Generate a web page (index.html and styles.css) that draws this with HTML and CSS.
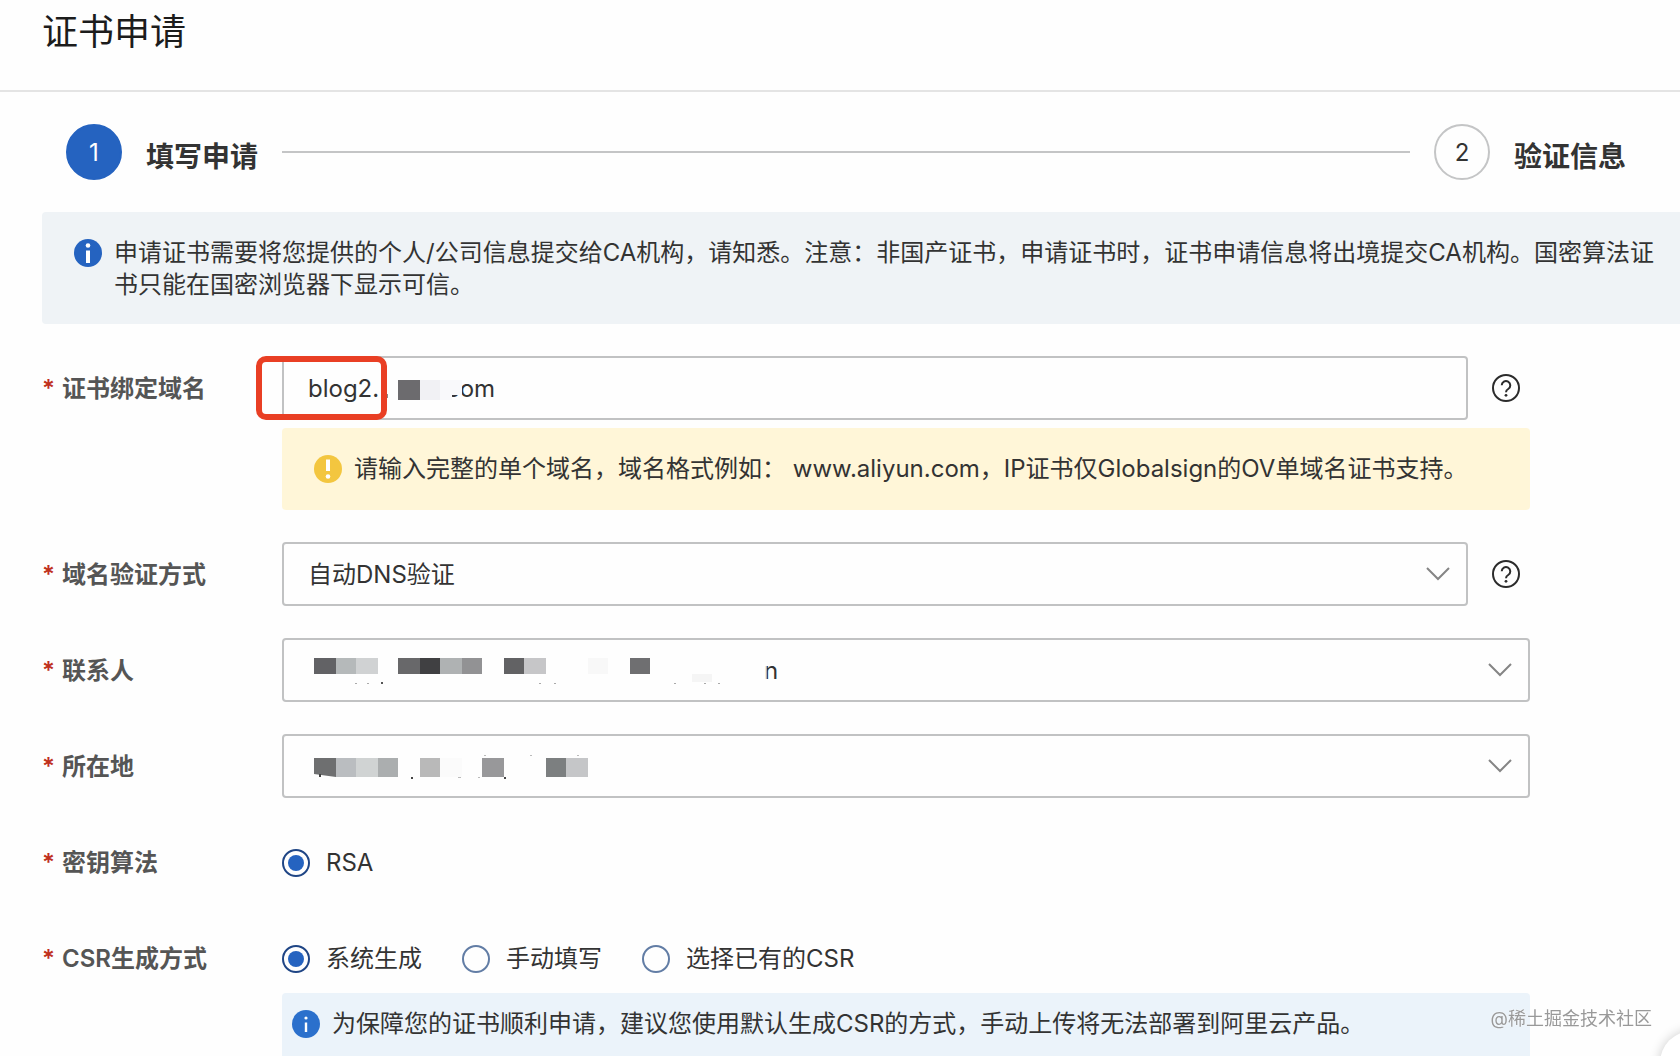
FILE: index.html
```html
<!DOCTYPE html>
<html lang="zh-CN">
<head>
<meta charset="utf-8">
<meta name="viewport" content="width=device-width, initial-scale=1">
<title>证书申请</title>
<link rel="stylesheet" href="styles.css">
</head>
<body>
<header class="page-header"><h1 class="page-title">证书申请</h1></header>
<main class="page-main">
  <ol class="steps">
    <li class="step"><span class="step-number step-number-active">1</span><span class="step-label">填写申请</span></li>
    <li class="step-line" aria-hidden="true"></li>
    <li class="step"><span class="step-number">2</span><span class="step-label">验证信息</span></li>
  </ol>

  <section class="notice notice-page">
    <svg class="icon" viewBox="0 0 28 28" aria-hidden="true"><circle cx="14" cy="14" r="14" fill="#2563c0"/><circle cx="14" cy="6.5" r="2.3" fill="#fff"/><path d="M12 11.500h4V24h-4z" fill="#fff"/></svg>
    <p class="notice-text">申请证书需要将您提供的个人/公司信息提交给CA机构，请知悉。注意：非国产证书，申请证书时，证书申请信息将出境提交CA机构。国密算法证书只能在国密浏览器下显示可信。</p>
  </section>

  <form class="form">
    <div class="row">
      <label class="row-label" for="domain"><span class="required">*</span>证书绑定域名</label>
      <div class="row-body">
        <div class="control-line">
          <div class="control">
            <input class="field" id="domain" type="text" value="blog2.">
            <svg class="mask" width="260" height="64" aria-hidden="true">
              <text class="mask-text" x="164" y="41">com</text>
              <path d="M162 22h17v17h-11v4h-6z" fill="#fefefe"/>
              <path d="M104 38h2v4h-2z" fill="#888"/>
              <path d="M116 24h22v20h-22z" fill="#6c6b6e"/>
              <path d="M138 24h20v20h-20z" fill="#f1f1f4"/>
              <path d="M158 24h22v15h-10v5h-12z" fill="#f9f9fb"/>
            </svg>
            <span class="highlight" aria-hidden="true"></span>
          </div>
          <button class="help" type="button" aria-label="帮助"><svg class="help-icon" viewBox="0 0 28 28" fill="none" stroke="#2b2b2b" stroke-width="2"><circle cx="14" cy="14" r="13"/><path d="M9.700 11.300a4.300 4.300 0 1 1 6.500 3.700c-1.500.9-2.200 1.500-2.200 3.300"/><circle cx="14" cy="21.300" r="1.400" fill="#2b2b2b" stroke="none"/></svg></button>
        </div>
        <div class="notice notice-warning">
          <svg class="icon" viewBox="0 0 28 28" aria-hidden="true"><circle cx="14" cy="14" r="14" fill="#f3c63f"/><path d="M12 4.500h4V16h-4z" fill="#fff"/><circle cx="14" cy="21.500" r="2.300" fill="#fff"/></svg>
          <p class="notice-text">请输入完整的单个域名，域名格式例如： www.aliyun.com，IP证书仅Globalsign的OV单域名证书支持。</p>
        </div>
      </div>
    </div>

    <div class="row">
      <label class="row-label" for="verify"><span class="required">*</span>域名验证方式</label>
      <div class="row-body">
        <div class="control-line">
          <div class="control">
            <select class="field" id="verify"><option>自动DNS验证</option></select>
            <svg class="chevron" viewBox="0 0 24 14" aria-hidden="true"><path d="M1 1l11 11L23 1"/></svg>
          </div>
          <button class="help" type="button" aria-label="帮助"><svg class="help-icon" viewBox="0 0 28 28" fill="none" stroke="#2b2b2b" stroke-width="2"><circle cx="14" cy="14" r="13"/><path d="M9.700 11.300a4.300 4.300 0 1 1 6.500 3.700c-1.500.9-2.200 1.500-2.200 3.300"/><circle cx="14" cy="21.300" r="1.400" fill="#2b2b2b" stroke="none"/></svg></button>
        </div>
      </div>
    </div>

    <div class="row">
      <label class="row-label" for="contact"><span class="required">*</span>联系人</label>
      <div class="row-body">
        <div class="control">
          <select class="field" id="contact"><option></option></select>
          <svg class="mask" width="520" height="64" aria-hidden="true">
            <text class="mask-text" x="482" y="41">n</text>
            <path d="M480 24h5v17h-5z" fill="#fff" fill-opacity=".6"/>
            <path d="M32 20h22v16H32z" fill="#626265"/><path d="M54 20h20v16H54z" fill="#b5b9ba"/><path d="M74 20h22v16H74z" fill="#d0d2d3"/>
            <path d="M116 20h22v16h-22z" fill="#68686a"/><path d="M138 20h20v16h-20z" fill="#404042"/><path d="M158 20h22v16h-22z" fill="#afb2b3"/><path d="M180 20h20v16h-20z" fill="#929294"/>
            <path d="M222 20h20v16h-20z" fill="#626264"/><path d="M242 20h22v16h-22z" fill="#c6c6c8"/>
            <path d="M306 20h20v16h-20z" fill="#f8f8f8"/><path d="M348 20h20v16h-20z" fill="#6f6f71"/><path d="M410 36h20v8h-20z" fill="#f5f5f5"/>
            <path d="M99 44h2v2h-2z" fill="#555"/><path d="M73 45h2v1h-2zM85 45h2v1h-2zM257 45h2v1h-2zM272 45h2v1h-2zM392 45h2v1h-2zM422 45h2v1h-2zM436 45h2v1h-2z" fill="#aaa"/>
          </svg>
          <svg class="chevron" viewBox="0 0 24 14" aria-hidden="true"><path d="M1 1l11 11L23 1"/></svg>
        </div>
      </div>
    </div>

    <div class="row">
      <label class="row-label" for="location"><span class="required">*</span>所在地</label>
      <div class="row-body">
        <div class="control">
          <select class="field" id="location"><option></option></select>
          <svg class="mask" width="520" height="64" aria-hidden="true">
            <path d="M32 24h22v19l-22-3z" fill="#6e6f70"/><path d="M54 24h20v19H54z" fill="#babdc0"/><path d="M74 24h22v19H74z" fill="#d0d3d3"/><path d="M96 24h20v19H96z" fill="#abaeaf"/>
            <path d="M138 24h20v19h-20z" fill="#b9b9b9"/><path d="M158 24h22v19h-22z" fill="#fbfbfb"/><path d="M200 24h22v19h-22z" fill="#98989a"/>
            <path d="M264 24h20v19h-20z" fill="#7c7f80"/><path d="M284 24h22v19h-22z" fill="#c5c6c8"/>
            <path d="M37 40h2v3h-2zM129 43h2v2h-2zM222 43h2v2h-2z" fill="#444"/><path d="M176 43h3v1h-3zM196 43h2v1h-2zM202 21h2v1h-2zM248 21h2v1h-2zM295 21h2v1h-2z" fill="#bbb"/>
          </svg>
          <svg class="chevron" viewBox="0 0 24 14" aria-hidden="true"><path d="M1 1l11 11L23 1"/></svg>
        </div>
      </div>
    </div>

    <div class="row" role="radiogroup" aria-labelledby="algorithm-label">
      <span class="row-label" id="algorithm-label"><span class="required">*</span>密钥算法</span>
      <div class="row-body">
        <div class="radios">
          <label class="radio"><input class="radio-input" type="radio" name="algorithm" checked>RSA</label>
        </div>
      </div>
    </div>

    <div class="row" role="radiogroup" aria-labelledby="csr-label">
      <span class="row-label" id="csr-label"><span class="required">*</span>CSR生成方式</span>
      <div class="row-body row-body-tight">
        <div class="radios">
          <label class="radio"><input class="radio-input" type="radio" name="csr" checked>系统生成</label>
          <label class="radio"><input class="radio-input" type="radio" name="csr">手动填写</label>
          <label class="radio"><input class="radio-input" type="radio" name="csr">选择已有的CSR</label>
        </div>
        <div class="notice notice-info">
          <svg class="icon" viewBox="0 0 28 28" aria-hidden="true"><circle cx="14" cy="14" r="14" fill="#2b70cc"/><circle cx="14" cy="8" r="1.600" fill="#fff"/><path d="M12.800 12.500h2.400v9.500h-2.400z" fill="#fff"/></svg>
          <p class="notice-text">为保障您的证书顺利申请，建议您使用默认生成CSR的方式，手动上传将无法部署到阿里云产品。</p>
        </div>
      </div>
    </div>
  </form>
</main>
<span class="watermark">@稀土掘金技术社区</span>
<button class="float-button" type="button" aria-label="更多"></button>
</body>
</html>
```
FILE: styles.css
```css
* {
  box-sizing: border-box;
}

body {
  margin: 0;
  background: #fefefe;
  color: #333;
  font: 24px/32px Inter, "Noto Sans CJK SC", sans-serif;
  overflow-x: hidden;
}

.page-header {
  height: 92px;
  padding: 6px 42px 0;
  border-bottom: 2px solid #e4e4e4;
}

.page-title {
  margin: 0;
  color: #1c1c1c;
  font-size: 36px;
  line-height: 52px;
  font-weight: 400;
}

.page-main {
  padding: 32px 0 0 42px;
}

.steps {
  display: flex;
  align-items: center;
  gap: 24px;
  margin: 0 54px 32px 24px;
  padding: 0;
  list-style: none;
}

.step {
  display: flex;
  align-items: center;
  gap: 24px;
}

.step-number {
  display: grid;
  place-items: center;
  width: 56px;
  height: 56px;
  padding-top: 2px;
  border: 2px solid #c4c5c6;
  border-radius: 50%;
}

.step-number-active {
  border-color: #2563c0;
  background: #2563c0;
  color: #fff;
}

.step-label {
  padding-top: 10px;
  font-size: 28px;
  font-weight: 600;
}

.step-line {
  flex: 1;
  height: 2px;
  background: #c4c5c6;
}

.notice {
  display: flex;
  align-items: flex-start;
  gap: 12px;
  border-radius: 4px;
}

.notice-text {
  margin: 0;
}

.notice-page {
  padding: 25px 24px 23px 32px;
  border-radius: 4px 0 0 4px;
  background: #eff3f6;
}

.notice-warning {
  padding: 25px 32px;
  background: #fff6d8;
}

.notice-info {
  padding: 15px 10px 16px;
  border-radius: 4px 4px 0 0;
  background: #ebf3fa;
}

.icon {
  display: block;
  flex: none;
  width: 28px;
  height: 28px;
  margin-top: 2px;
}

.form {
  display: flex;
  flex-direction: column;
  gap: 32px;
  padding: 32px 150px 0 0;
}

.row {
  display: grid;
  grid-template-columns: 240px minmax(0, 1fr);
}

.row-label {
  display: flex;
  align-items: center;
  height: 64px;
  padding-top: 2px;
  color: #555;
  font-weight: 600;
}

.required {
  width: 20px;
  color: #c0301f;
}

.row-body {
  display: flex;
  flex-direction: column;
  gap: 8px;
}

.row-body-tight {
  gap: 3px;
}

.control-line {
  display: flex;
  align-items: center;
  gap: 24px;
  padding-right: 10px;
}

.control {
  position: relative;
  flex: 1;
}

.field {
  display: block;
  width: 100%;
  height: 64px;
  padding: 1px 24px 0;
  border: 2px solid #c1c2c3;
  border-radius: 4px;
  outline: none;
  appearance: none;
  background: #fefefe;
  color: #333;
  font: inherit;
}

.mask {
  position: absolute;
  top: 0;
  left: 0;
  pointer-events: none;
}

.mask-text {
  fill: #333;
}

.highlight {
  position: absolute;
  top: 0;
  left: -26px;
  width: 131px;
  height: 64px;
  border: 6px solid #e93f24;
  border-radius: 10px;
  pointer-events: none;
}

.chevron {
  position: absolute;
  top: 25px;
  right: 18px;
  width: 24px;
  height: 14px;
  fill: none;
  stroke: #858585;
  stroke-width: 2;
  pointer-events: none;
}

.help {
  padding: 0;
  border: 0;
  background: none;
}

.help-icon {
  display: block;
  width: 28px;
  height: 28px;
}

.radios {
  display: flex;
  align-items: center;
  gap: 40px;
  height: 64px;
  padding-top: 2px;
}

.radio {
  display: flex;
  align-items: center;
  gap: 16px;
}

.radio-input {
  display: grid;
  place-items: center;
  width: 28px;
  height: 28px;
  margin: 0;
  border: 2px solid #627da5;
  border-radius: 50%;
  appearance: none;
}

.radio-input:checked {
  border-color: #1f4585;
}

.radio-input:checked::before {
  content: "";
  width: 16px;
  height: 16px;
  border-radius: 50%;
  background: #2563c0;
}

.watermark {
  position: fixed;
  right: 28px;
  bottom: 24px;
  color: #999;
  font-size: 18px;
  line-height: 26px;
  text-shadow: 0 0 2px #fff;
}

.float-button {
  position: fixed;
  right: -44px;
  bottom: -39px;
  width: 64px;
  height: 64px;
  border: 0;
  border-radius: 50%;
  background: #fff;
  box-shadow: 0 0 12px rgb(0 0 0 / 20%);
}
```
